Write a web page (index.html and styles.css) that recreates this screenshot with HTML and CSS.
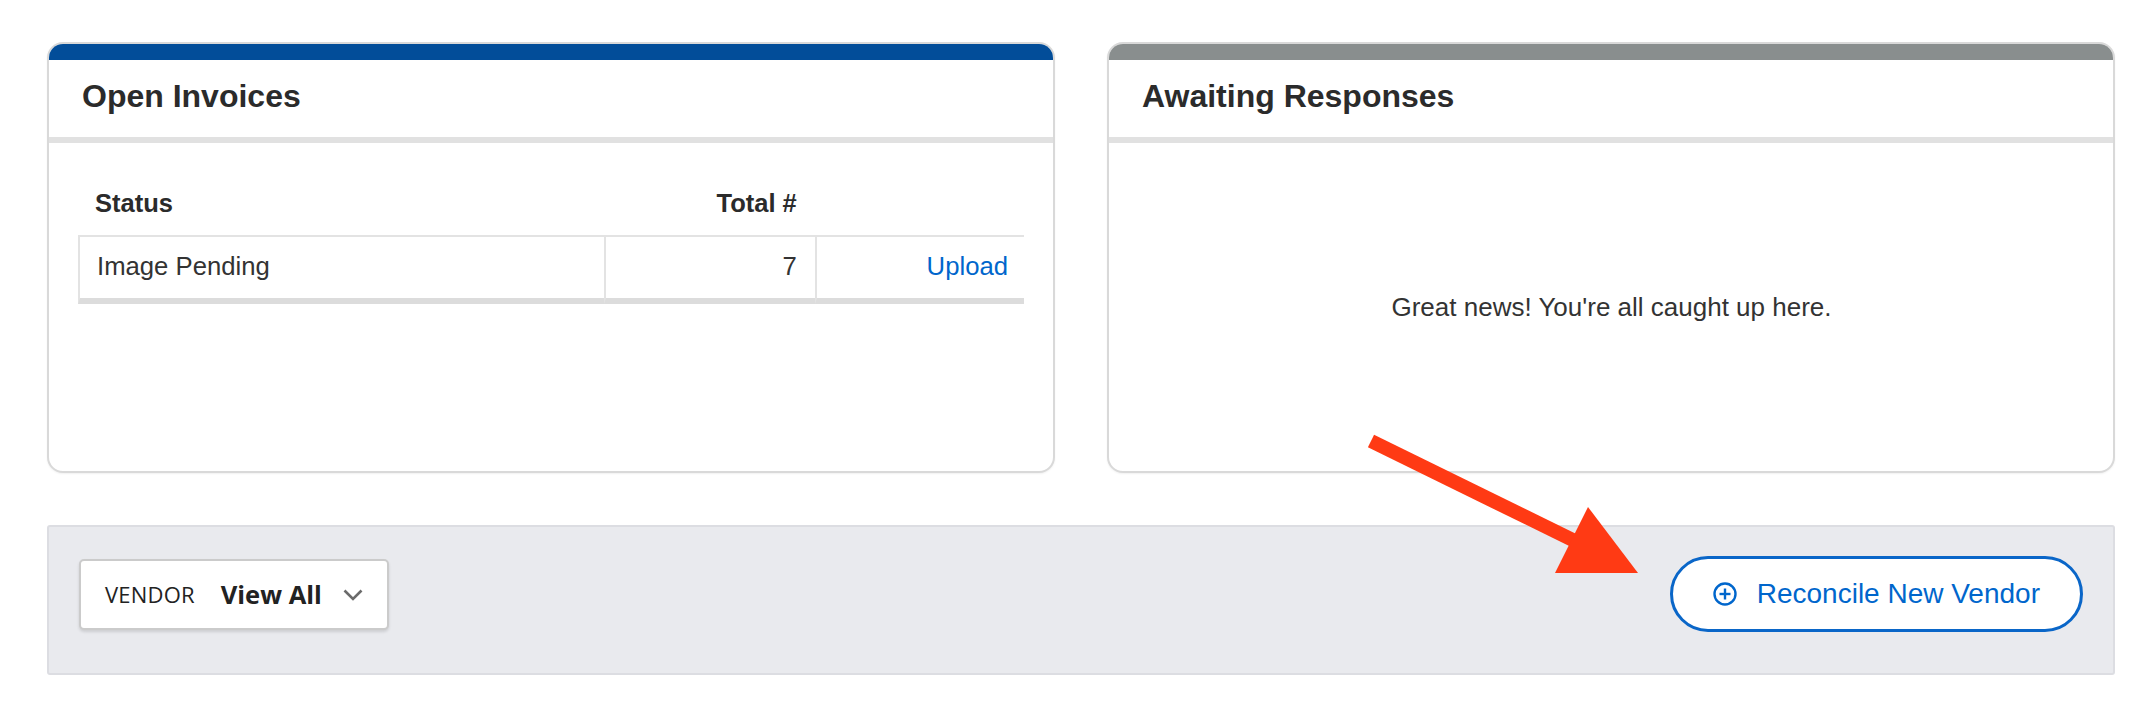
FILE: index.html
```html
<!DOCTYPE HTML>
<html lang="en">
<head>
	<title>Vendor Reconciliation</title>
	<meta charset="utf-8">
	<link rel="stylesheet" href="styles.css">
</head>
<body>
	<div class="page">
		<div class="cards">
			<section class="card">
				<div class="card-bar bar-blue"></div>
				<h2 class="card-title">Open Invoices</h2>
				<div class="card-body">
					<table class="status-table">
						<colgroup>
							<col class="col-status">
							<col class="col-total">
							<col class="col-action">
						</colgroup>
						<thead>
							<tr>
								<th>Status</th>
								<th class="num">Total #</th>
								<th></th>
							</tr>
						</thead>
						<tbody>
							<tr>
								<td>Image Pending</td>
								<td class="num">7</td>
								<td class="num action"><a href="#">Upload</a></td>
							</tr>
						</tbody>
					</table>
				</div>
			</section>

			<section class="card">
				<div class="card-bar bar-gray"></div>
				<h2 class="card-title">Awaiting Responses</h2>
				<div class="card-body empty">
					<p>Great news! You're all caught up here.</p>
				</div>
			</section>
		</div>

		<div class="toolbar">
			<button class="dropdown" type="button">
				<span class="dd-label">VENDOR</span>
				<span class="dd-value">View All</span>
				<svg class="dd-chevron" width="20" height="12" viewBox="0 0 20 12">
					<polyline points="1.5,1.5 10,10 18.5,1.5" fill="none" stroke="#6b6b6b" stroke-width="2.6"/>
				</svg>
			</button>

			<button class="btn-outline" type="button">
				<svg class="btn-icon" width="24" height="24" viewBox="0 0 24 24">
					<circle cx="12" cy="12" r="10.5" fill="none" stroke="#0066cc" stroke-width="2.4"/>
					<line x1="12" y1="6.5" x2="12" y2="17.5" stroke="#0066cc" stroke-width="2.4"/>
					<line x1="6.5" y1="12" x2="17.5" y2="12" stroke="#0066cc" stroke-width="2.4"/>
				</svg>
				Reconcile New Vendor
			</button>
		</div>
	</div>

	<!-- annotation arrow drawn over the screenshot -->
	<svg class="annotation" width="2144" height="702" viewBox="0 0 2144 702">
		<line x1="1371" y1="441" x2="1585" y2="546" stroke="#ff3a14" stroke-width="14"/>
		<polygon points="1588,507 1555,573 1638,573" fill="#ff3a14"/>
	</svg>
</body>
</html>
```

FILE: styles.css
```css
html {
	height: 100%;
}

body {
	margin: 0;
	padding: 0;
	background: #ffffff;
	color: #333333;
	font-family: "Liberation Sans", Arial, sans-serif;
}

.page {
	padding: 42px 29px 0 47px;
}

.cards {
	display: grid;
	grid-template-columns: 1008px 1008px;
	column-gap: 52px;
}

.card {
	display: flex;
	flex-direction: column;
	box-sizing: border-box;
	height: 431px;
	border: 2px solid #d9d9d9;
	border-radius: 16px;
	overflow: hidden;
	background: #ffffff;
	box-shadow: 0 1px 2px rgba(0,0,0,0.06);
}

.card-bar {
	height: 16px;
	flex: none;
}

.bar-blue {
	background: #024d99;
}

.bar-gray {
	background: #898e8e;
}

.card-title {
	margin: 0;
	padding: 18px 33px 23px;
	font-size: 32px;
	line-height: 36px;
	font-weight: bold;
	color: #2b2b2b;
	border-bottom: 6px solid #e1e1e1;
	flex: none;
}

.card-body {
	flex: 1;
	padding: 28px 29px 0;
}

.card-body.empty {
	display: flex;
	align-items: center;
	justify-content: center;
	padding: 0 29px;
}

.card-body.empty p {
	margin: 0 0 0 1px;
	font-size: 26px;
	line-height: 30px;
	color: #333333;
}

.status-table {
	width: 100%;
	table-layout: fixed;
	border-collapse: separate;
	border-spacing: 0;
	font-size: 25.7px;
	line-height: 30px;
}

.col-status {
	width: 525px;
}

.col-total {
	width: 211px;
}

.col-action {
	width: 209px;
}

.status-table th {
	padding: 17px 18px 17px 17px;
	text-align: left;
	font-weight: bold;
	font-size: 25.5px;
	color: #2b2b2b;
}

.status-table td {
	padding: 14px 18px 17px 17px;
	border-top: 2px solid #e3e3e3;
	border-bottom: 6px solid #dcdcdc;
	border-left: 2px solid #e3e3e3;
	color: #333333;
}

.status-table td.action {
	padding-right: 16px;
}

.status-table .num {
	text-align: right;
}

.status-table a {
	color: #0066cc;
	text-decoration: none;
}

.toolbar {
	display: flex;
	align-items: center;
	justify-content: space-between;
	margin-top: 52px;
	padding: 29px 30px 41px;
	background: #e9eaee;
	border: 2px solid #dcdde2;
	border-radius: 3px;
}

.dropdown {
	display: flex;
	align-items: center;
	box-sizing: border-box;
	height: 71px;
	padding: 0 24px;
	background: #ffffff;
	border: 2px solid #cbcbcb;
	border-radius: 5px;
	box-shadow: 0 2px 3px rgba(0,0,0,0.12);
	font-family: "Open Sans", "Noto Sans", sans-serif;
	color: #222222;
	cursor: pointer;
}

.dd-label {
	font-size: 22px;
	letter-spacing: 0.2px;
}

.dd-value {
	margin-left: 26px;
	font-size: 25.5px;
	font-weight: bold;
}

.dd-chevron {
	margin-left: 21px;
	margin-top: 2px;
}

.btn-outline {
	display: flex;
	align-items: center;
	gap: 20px;
	box-sizing: border-box;
	height: 76px;
	padding: 0 40px 0 40px;
	background: #ffffff;
	border: 3px solid #0a66c8;
	border-radius: 38px;
	font-family: "Liberation Sans", Arial, sans-serif;
	font-size: 28px;
	color: #0066cc;
	cursor: pointer;
}

.btn-icon {
	flex: none;
}

.annotation {
	position: absolute;
	top: 0;
	left: 0;
	pointer-events: none;
}
```
